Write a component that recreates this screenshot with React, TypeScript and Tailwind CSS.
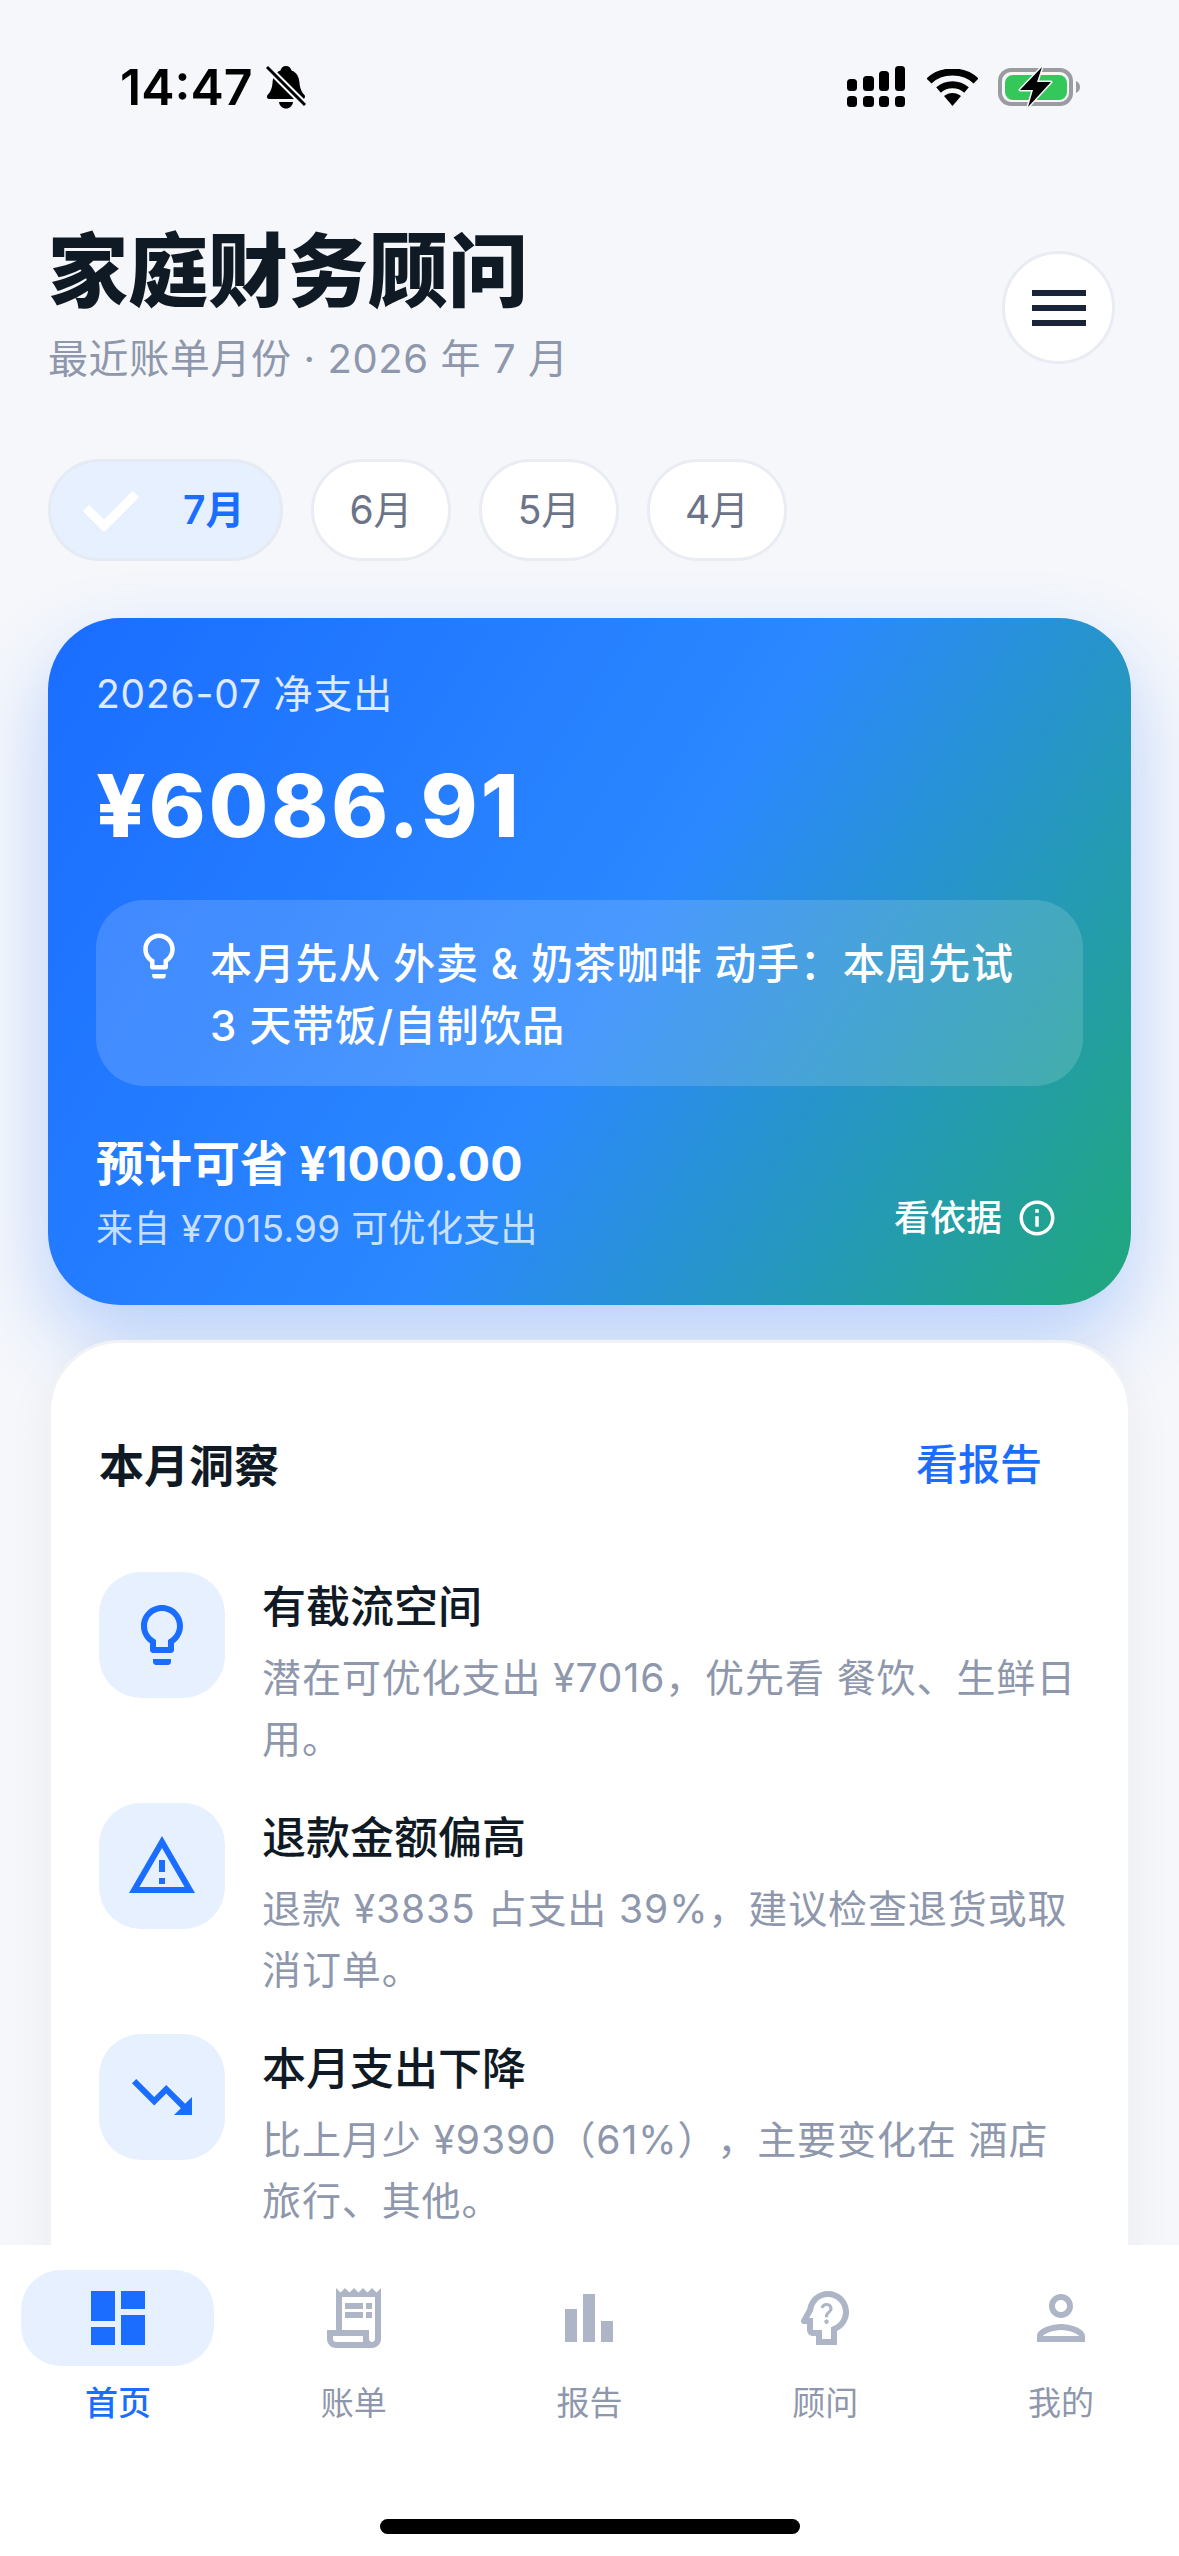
import {
  MdDashboard,
  MdInfoOutline,
  MdOutlineLightbulb,
  MdOutlinePerson,
  MdOutlinePsychologyAlt,
  MdOutlineReceiptLong,
  MdOutlineWarningAmber,
  MdTrendingDown,
} from "react-icons/md";

const months = ["6月", "5月", "4月"];

const insights = [
  { title: "有截流空间", desc: "潜在可优化支出 ¥7016，优先看 餐饮、生鲜日用。", Icon: MdOutlineLightbulb },
  { title: "退款金额偏高", desc: "退款 ¥3835 占支出 39%，建议检查退货或取消订单。", Icon: MdOutlineWarningAmber },
  { title: "本月支出下降", desc: "比上月少 ¥9390（61%），主要变化在 酒店旅行、其他。", Icon: MdTrendingDown },
];

const tabs = [
  { label: "首页", Icon: MdDashboard, active: true },
  { label: "账单", Icon: MdOutlineReceiptLong },
  { label: "报告", Icon: BarIcon },
  { label: "顾问", Icon: MdOutlinePsychologyAlt },
  { label: "我的", Icon: MdOutlinePerson },
];

function BarIcon({ size }: { size?: number }) {
  return (
    <svg width={size} height={size} viewBox="0 0 24 24" fill="currentColor">
      <path d="M4 9h4v11H4zm12 4h4v7h-4zm-6-9h4v16h-4z" />
    </svg>
  );
}

function StatusBar() {
  return (
    <div className="flex h-[174px] justify-between pl-[120px] pr-[97px] pt-[57px]">
      <div className="flex h-[60px] items-center gap-[12px]">
        <span className="text-[50px] font-semibold leading-[60px] text-black">14:47</span>
        {/* 무음 벨 */}
        <svg width="42" height="46" viewBox="0 0 42 46">
          <path
            d="M21 2c3 0 5 2 5.500 4.500C32 8.500 34 13 34.500 19c.5 6 2.500 9.500 5 12 1 1.500 .5 4-2 4H4.500c-2.500 0-3-2.500-2-4 2.500-2.500 4.500-6 5-12C8 13 10 8.500 15.500 6.500 16 4 18 2 21 2z"
            fill="#000"
          />
          <path d="M14 38h14c-.5 4-3.500 6.500-7 6.500S14.500 42 14 38z" fill="#000" />
          <path d="M1 2l40 40" stroke="#f5f7fb" strokeWidth="7" />
          <path d="M2 3l38 38" stroke="#000" strokeWidth="3" />
        </svg>
      </div>
      <div className="flex h-[60px] items-center">
        {/* 듀얼심 신호 */}
        <svg width="58" height="42" viewBox="0 0 58 42" fill="#000">
          <rect x="0" y="13" width="10" height="12" rx="3.500" />
          <rect x="16" y="10" width="11" height="15" rx="3.500" />
          <rect x="32" y="5" width="10" height="20" rx="3.500" />
          <rect x="48" y="0" width="10" height="25" rx="3.500" />
          <rect x="0" y="30" width="10" height="11" rx="3.500" />
          <rect x="16" y="30" width="11" height="11" rx="3.500" />
          <rect x="32" y="30" width="10" height="11" rx="3.500" />
          <rect x="48" y="30" width="10" height="11" rx="3.500" />
        </svg>
        <svg width="51" height="37" viewBox="0 0 51 37" className="ml-[22px]">
          <path d="M2 12C14 0 37 0 49 12" fill="none" stroke="#000" strokeWidth="7" />
          <path d="M11.500 21c8-7 20-7 28 0" fill="none" stroke="#000" strokeWidth="7" />
          <path d="M17 27c5-4 12-4 17 0l-8.500 10z" fill="#000" />
        </svg>
        <svg width="84" height="40" viewBox="0 0 84 40" className="ml-[20px]">
          <rect x="2" y="3" width="71" height="34" rx="11" fill="none" stroke="#9b9ca1" strokeWidth="4" />
          <rect x="7" y="8" width="62" height="25" rx="8" fill="#34c85a" />
          <path d="M78 14c2.500 1 4 3 4 6s-1.500 5-4 6z" fill="#9b9ca1" />
          <path
            d="M44 0L22 23h13l-5 17 23-25H39z"
            fill="#000"
            stroke="#f5f7fb"
            strokeWidth="3"
            strokeLinejoin="round"
            paintOrder="stroke"
          />
        </svg>
      </div>
    </div>
  );
}

function Header() {
  return (
    <div className="flex items-center justify-between pt-[49px] pl-[48px] pr-[64px]">
      <div>
        <h1 className="text-[80px] font-black leading-[96px] text-[#0f1a24]">家庭财务顾问</h1>
        <p className="mt-[12px] text-[40px] leading-[56px] tracking-[0.6px] text-[#8e97ab]">
          最近账单月份 · 2026 年 7 月
        </p>
      </div>
      <button className="mt-[5px] flex h-[113px] w-[113px] flex-col items-center justify-center gap-[9px] rounded-full border-[3px] border-[#e9ecf3] bg-white">
        <span className="h-[6px] w-[54px] bg-[#1a2438]" />
        <span className="h-[6px] w-[54px] bg-[#1a2438]" />
        <span className="h-[6px] w-[54px] bg-[#1a2438]" />
      </button>
    </div>
  );
}

function MonthChips() {
  return (
    <div className="mt-[72px] flex gap-[28px] px-[48px]">
      <div className="flex h-[102px] w-[235px] items-center gap-[44px] rounded-full border-[3px] border-[#e6eaf2] bg-[#e6f0ff] pl-[32px]">
        <svg width="56" height="41" viewBox="0 0 56 41" fill="none" stroke="#fff" strokeWidth="9">
          <path d="M3 18l18 18L53 4" />
        </svg>
        <span className="text-[39px] font-semibold text-[#1a6dff]">7月</span>
      </div>
      {months.map((m) => (
        <div
          key={m}
          className="flex h-[102px] w-[140px] items-center justify-center rounded-full border-[3px] border-[#e9ecf3] bg-white text-[39px] text-[#6b7489]"
        >
          {m}
        </div>
      ))}
    </div>
  );
}

function HeroCard() {
  return (
    <section className="mx-[48px] mt-[57px] h-[687px] rounded-[72px] bg-[linear-gradient(122deg,#1a6dff_0%,#2b88ff_52%,#1fa87a_100%)] px-[48px] pt-[48px] shadow-[0_36px_80px_rgba(26,109,255,0.28)]">
      <p className="text-[39px] leading-[56px] tracking-[0.8px] text-white/85">2026-07 净支出</p>
      <p className="mt-[32px] text-[86px] font-extrabold leading-[104px] tracking-[3px] text-white">¥6086.91</p>
      <div className="mt-[42px] flex h-[186px] gap-[24px] rounded-[48px] bg-white/15 pl-[36px] pr-[50px] pt-[33px]">
        <MdOutlineLightbulb size={54} className="mt-[-4px] shrink-0 text-white" />
        <p className="text-[42px] font-medium leading-[62px] tracking-[0.8px] text-white">
          本月先从 外卖 &amp; 奶茶咖啡 动手：本周先试 3 天带饭/自制饮品
        </p>
      </div>
      <div className="mt-[46px] flex items-end justify-between">
        <div>
          <p className="text-[48px] font-bold leading-[64px] text-white">预计可省 ¥1000.00</p>
          <p className="mt-[7px] text-[37px] leading-[52px] tracking-[0.3px] text-white/75">来自 ¥7015.99 可优化支出</p>
        </div>
        <div className="mb-[12px] mr-[25px] flex items-center gap-[14px] text-white">
          <span className="text-[36px] font-medium leading-[50px]">看依据</span>
          <MdInfoOutline size={42} />
        </div>
      </div>
    </section>
  );
}

function InsightsCard() {
  return (
    <section className="mx-[48px] mt-[35px] rounded-t-[72px] border-[3px] border-[#f1f2f5] bg-white px-[48px] pb-[200px] pt-[92px] shadow-[0_12px_48px_rgba(15,26,36,0.05)]">
      <div className="flex items-center justify-between pr-[38px]">
        <h2 className="mt-[2px] mb-[-2px] text-[45px] font-bold leading-[60px] text-[#0f1a24]">本月洞察</h2>
        <span className="text-[42px] font-medium leading-[60px] text-[#1a6dff]">看报告</span>
      </div>
      <div className="mt-[77px] flex flex-col gap-[34px]">
        {insights.map(({ title, desc, Icon }) => (
          <div key={title} className="flex gap-[37px]">
            <div className="flex h-[126px] w-[126px] shrink-0 items-center justify-center rounded-[42px] bg-[#e6f0ff] text-[#1a6dff]">
              <Icon size={72} />
            </div>
            <div className="min-w-0 flex-1 pt-[5px]">
              <h3 className="text-[44px] font-medium leading-[60px] text-[#0f1a24]">{title}</h3>
              <p className="mt-[10px] text-[39px] leading-[61px] tracking-[0.9px] text-[#8e97ab] [text-spacing-trim:space-all]">
                {desc}
              </p>
            </div>
          </div>
        ))}
      </div>
    </section>
  );
}

function TabBar() {
  return (
    <nav className="z-10 flex h-[311px] shrink-0 flex-col items-center bg-white pt-[25px]">
      <div className="grid w-full grid-cols-5">
        {tabs.map(({ label, Icon, active }) => (
          <div key={label} className="flex flex-col items-center">
            <div
              className={
                active
                  ? "flex h-[96px] w-[193px] items-center justify-center rounded-[40px] bg-[#e6f0ff] text-[#1a6dff]"
                  : "flex h-[96px] w-[193px] items-center justify-center text-[#adb5c7]"
              }
            >
              <Icon size={72} />
            </div>
            <span
              className={
                active
                  ? "mt-[15px] text-[33px] font-medium leading-[44px] text-[#1a6dff]"
                  : "mt-[15px] text-[33px] leading-[44px] text-[#8e97ab]"
              }
            >
              {label}
            </span>
          </div>
        ))}
      </div>
      <div className="mt-[94px] h-[15px] w-[420px] rounded-full bg-black" />
    </nav>
  );
}

export default function App() {
  return (
    <div className="flex h-[2556px] w-[1179px] flex-col overflow-hidden bg-[#f5f7fb] font-['Inter','Noto_Sans_CJK_SC',sans-serif]">
      <div className="min-h-0 flex-1 overflow-hidden">
        <StatusBar />
        <Header />
        <MonthChips />
        <HeroCard />
        <InsightsCard />
      </div>
      <TabBar />
    </div>
  );
}
